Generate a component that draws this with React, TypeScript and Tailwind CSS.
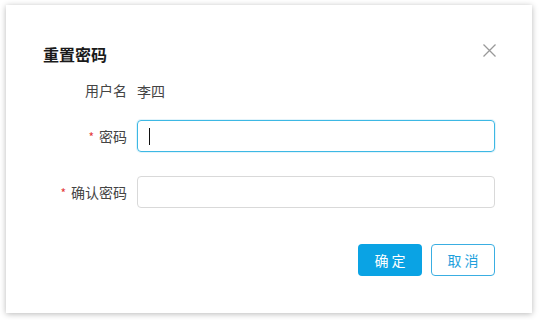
import React from "react";

const font = { fontFamily: '"Noto Sans CJK SC", "Noto Sans", sans-serif' };

type RowProps = {
  label: string;
  required?: boolean;
  children: React.ReactNode;
  className?: string;
};

const Row: React.FC<RowProps> = ({ label, required, children, className }) => (
  <div className={`flex items-center ${className ?? ""}`}>
    <div className="w-[94px] flex justify-end items-center text-[14px] text-[#444] pr-[10px]">
      {required && <span className="text-[#e4393c] text-[12px] mr-[5px] mt-[2px]">*</span>}
      <span>{label}</span>
    </div>
    <div className="flex-1">{children}</div>
  </div>
);

export default function App() {
  return (
    <div className="w-[539px] h-[320px] bg-white pt-[5px] pl-[6px]" style={font}>
      <div className="w-[526px] h-[308px] bg-white shadow-[0_1px_6px_rgba(0,0,0,0.28)] px-[37px] pt-[37px] relative">
        <div className="flex justify-between items-start">
          <h2 className="text-[16px] leading-[24px] font-bold text-[#1a1a1a]">重置密码</h2>
          <button className="mt-[1px] mr-[-2px] text-[#999]" aria-label="close">
            <svg width="15" height="15" viewBox="0 0 15 15">
              <path d="M1.5 1.5L13.5 13.5M13.5 1.5L1.5 13.5" stroke="#999" strokeWidth="1.3" />
            </svg>
          </button>
        </div>

        <Row label="用户名" className="mt-[13px] h-[22px]">
          <span className="text-[14px] text-[#444]">李四</span>
        </Row>

        <Row label="密码" required className="mt-[19px]">
          <div className="h-[32px] border border-[#3db8e4] rounded-[4px] shadow-[0_0_0_1px_rgba(61,184,228,0.15)] flex items-center pl-[11px]">
            <span className="w-[1px] h-[17px] bg-[#111]" />
          </div>
        </Row>

        <Row label="确认密码" required className="mt-[24px]">
          <div className="h-[32px] border border-[#d9d9d9] rounded-[4px]" />
        </Row>

        <div className="flex justify-end gap-[9px] mt-[36px]">
          <button className="w-[64px] h-[32px] rounded-[4px] bg-[#0aa3e4] text-white text-[14px] tracking-[3px] pl-[3px]">
            确定
          </button>
          <button className="w-[64px] h-[32px] rounded-[4px] border border-[#3aaee2] bg-white text-[#1e9fdc] text-[14px] tracking-[3px] pl-[3px]">
            取消
          </button>
        </div>
      </div>
    </div>
  );
}
